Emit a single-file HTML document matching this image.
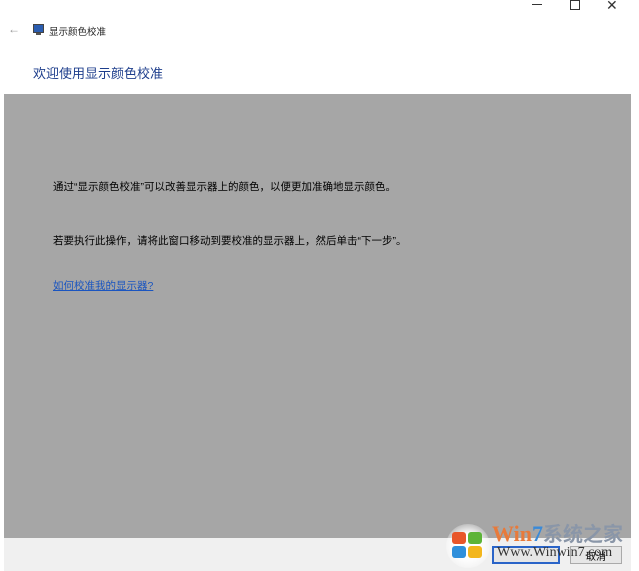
<!DOCTYPE html>
<html><head><meta charset="utf-8"><style>
*{margin:0;padding:0;box-sizing:border-box}
body{width:639px;height:571px;background:#fff;position:relative;overflow:hidden;font-family:"Liberation Sans","Microsoft YaHei","Noto Sans CJK SC",sans-serif;color:#000}
.abs{position:absolute}
.gray{left:4px;top:94px;width:627px;height:444px;background:#a6a6a6}
.bar{left:4px;top:538px;width:627px;height:33px;background:#f0f0f0}
.t{font-size:10.5px;white-space:nowrap}
</style></head><body>
<div class="abs" style="left:532px;top:4px;width:10px;height:1px;background:#333"></div>
<div class="abs" style="left:570px;top:0px;width:10px;height:10px;border:1px solid #333"></div>
<div class="abs" style="left:606px;top:-3px;font-size:14px;color:#333">✕</div>
<div class="abs" style="left:8px;top:22px;font-size:12px;color:#999">←</div>
<div class="abs" style="left:33px;top:24px;width:11px;height:9px;background:#2a5db0;border:1px solid #444"></div>
<div class="abs" style="left:36px;top:33px;width:5px;height:2px;background:#555"></div>
<div class="abs t" style="left:49px;top:24px;font-size:9.5px;color:#222">显示颜色校准</div>
<div class="abs" style="left:33px;top:63px;font-size:13px;color:#1e3e8c;white-space:nowrap">欢迎使用显示颜色校准</div>
<div class="abs gray"></div>
<div class="abs bar"></div>
<div class="abs t" style="left:53px;top:179px">通过“显示颜色校准”可以改善显示器上的颜色，以便更加准确地显示颜色。</div>
<div class="abs t" style="left:53px;top:233px">若要执行此操作，请将此窗口移动到要校准的显示器上，然后单击“下一步”。</div>
<div class="abs t" style="left:53px;top:278px;color:#1a55c0;text-decoration:underline">如何校准我的显示器?</div>
<div class="abs" style="left:492px;top:546px;width:68px;height:18px;border:2px solid #2a64c8;background:#e6e6e6"></div>
<div class="abs" style="left:570px;top:546px;width:52px;height:18px;border:1px solid #aaa;background:#e6e6e6"></div>
<div class="abs t" style="left:586px;top:548px;font-size:10px">取消</div>
<div class="abs" style="left:446px;top:524px;width:44px;height:44px;border-radius:50%;background:radial-gradient(circle,#fff 40%,rgba(255,255,255,0.3) 70%)"></div>
<div class="abs" style="left:452px;top:532px;width:14px;height:12px;background:#e8562a;border-radius:3px"></div>
<div class="abs" style="left:468px;top:532px;width:14px;height:12px;background:#5db438;border-radius:3px"></div>
<div class="abs" style="left:452px;top:546px;width:14px;height:12px;background:#2f8fdb;border-radius:3px"></div>
<div class="abs" style="left:468px;top:546px;width:14px;height:12px;background:#f3b61c;border-radius:3px"></div>
<div class="abs" style="left:492px;top:518px;font-size:22px;font-weight:bold;color:#e87a3a;white-space:nowrap;font-family:'Liberation Serif',serif">Win<span style="color:#3a8ad8">7</span><span style="color:#8a96a8;font-family:'Noto Sans CJK SC',sans-serif;font-size:20px">系统之家</span></div>
<div class="abs" style="left:497px;top:545px;font-size:14px;color:#333;white-space:nowrap;font-family:'Liberation Serif',serif">Www.Winwin7.com</div>
</body></html>
